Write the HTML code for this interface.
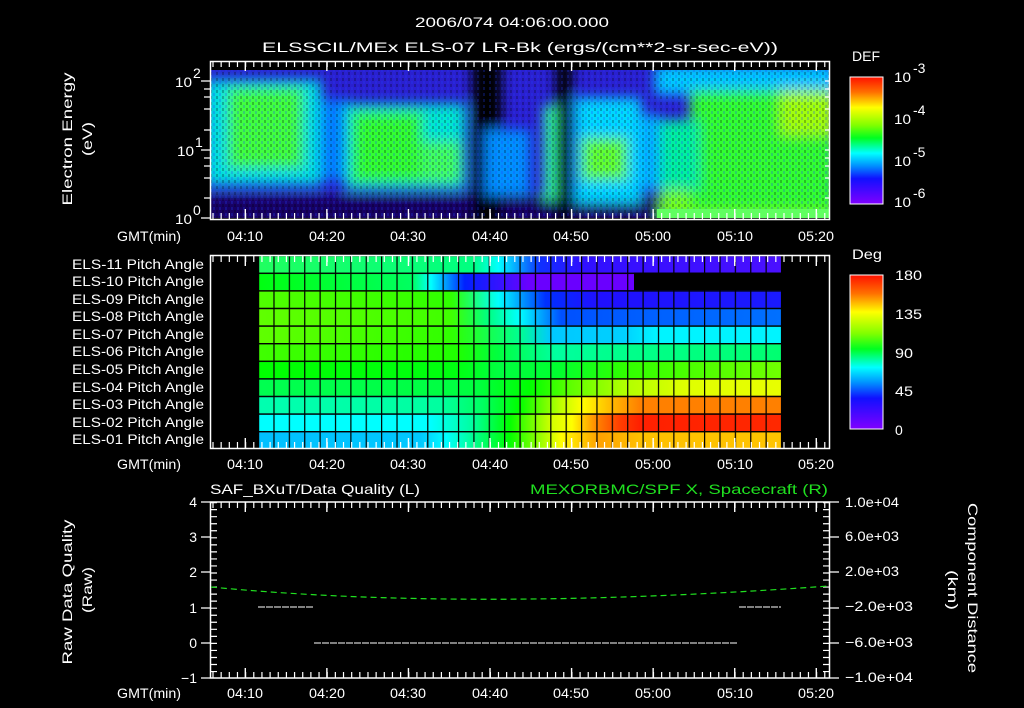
<!DOCTYPE html>
<html><head><meta charset="utf-8"><style>
html,body{margin:0;padding:0;background:#000;width:1024px;height:708px;overflow:hidden}
svg{display:block}
text{font-family:"Liberation Sans",sans-serif;fill:#fff;font-size:14px}
</style></head><body>
<svg width="1024" height="708" viewBox="0 0 1024 708" xmlns="http://www.w3.org/2000/svg">
<defs>
<linearGradient id="cb" x1="0" y1="0" x2="0" y2="1">
<stop offset="0" stop-color="#ff1000"/><stop offset="0.12" stop-color="#ff7000"/><stop offset="0.24" stop-color="#ffff00"/><stop offset="0.38" stop-color="#80ff00"/><stop offset="0.48" stop-color="#00ff20"/><stop offset="0.6" stop-color="#00ffff"/><stop offset="0.7" stop-color="#0090ff"/><stop offset="0.8" stop-color="#1010ff"/><stop offset="1" stop-color="#8000ff"/>
</linearGradient>
<filter id="bl" filterUnits="userSpaceOnUse" x="150" y="20" width="750" height="260"><feGaussianBlur stdDeviation="6"/></filter>
<clipPath id="sp"><rect x="211" y="70" width="618" height="148"/></clipPath>
<linearGradient id="r1"><stop offset="0" stop-color="#20ff60"/><stop offset="0.41" stop-color="#00ff80"/><stop offset="0.46" stop-color="#00ffff"/><stop offset="0.54" stop-color="#1030ff"/><stop offset="0.62" stop-color="#3010ff"/><stop offset="1" stop-color="#4a10ff"/></linearGradient>
<linearGradient id="r2"><stop offset="0" stop-color="#00ff10"/><stop offset="0.41" stop-color="#00ff60"/><stop offset="0.46" stop-color="#00ffff"/><stop offset="0.55" stop-color="#0020ff"/><stop offset="0.66" stop-color="#4010ff"/><stop offset="0.72" stop-color="#6a00ff"/></linearGradient>
<linearGradient id="r3"><stop offset="0" stop-color="#50ff00"/><stop offset="0.37" stop-color="#30ff00"/><stop offset="0.46" stop-color="#00ffff"/><stop offset="0.55" stop-color="#0030ff"/><stop offset="0.65" stop-color="#2010ff"/><stop offset="1" stop-color="#1a1aff"/></linearGradient>
<linearGradient id="r4"><stop offset="0" stop-color="#60ff00"/><stop offset="0.37" stop-color="#40ff00"/><stop offset="0.44" stop-color="#00ff80"/><stop offset="0.5" stop-color="#00ffff"/><stop offset="0.58" stop-color="#0050ff"/><stop offset="0.75" stop-color="#0060ff"/><stop offset="1" stop-color="#0070ff"/></linearGradient>
<linearGradient id="r5"><stop offset="0" stop-color="#60ff00"/><stop offset="0.37" stop-color="#30ff00"/><stop offset="0.5" stop-color="#00ff90"/><stop offset="0.56" stop-color="#00c8ff"/><stop offset="0.7" stop-color="#00d0ff"/><stop offset="0.76" stop-color="#00f4ff"/><stop offset="1" stop-color="#00f4ff"/></linearGradient>
<linearGradient id="r6"><stop offset="0" stop-color="#40ff00"/><stop offset="0.38" stop-color="#20ff00"/><stop offset="0.46" stop-color="#00ff40"/><stop offset="0.57" stop-color="#00ffa0"/><stop offset="0.65" stop-color="#00ff90"/><stop offset="1" stop-color="#00ff70"/></linearGradient>
<linearGradient id="r7"><stop offset="0" stop-color="#00ff00"/><stop offset="0.38" stop-color="#00ff10"/><stop offset="0.46" stop-color="#00ff40"/><stop offset="0.57" stop-color="#00ff30"/><stop offset="0.7" stop-color="#30ff00"/><stop offset="1" stop-color="#70ff00"/></linearGradient>
<linearGradient id="r8"><stop offset="0" stop-color="#00ff50"/><stop offset="0.42" stop-color="#00ff40"/><stop offset="0.52" stop-color="#00ff00"/><stop offset="0.6" stop-color="#60ff00"/><stop offset="0.7" stop-color="#b0ff00"/><stop offset="0.82" stop-color="#e0ff00"/><stop offset="1" stop-color="#e8ff00"/></linearGradient>
<linearGradient id="r9"><stop offset="0" stop-color="#00ffb0"/><stop offset="0.35" stop-color="#00ffa0"/><stop offset="0.43" stop-color="#00ff60"/><stop offset="0.5" stop-color="#00ff00"/><stop offset="0.58" stop-color="#c0ff00"/><stop offset="0.62" stop-color="#ffff00"/><stop offset="0.67" stop-color="#ffc000"/><stop offset="0.73" stop-color="#ff8000"/><stop offset="1" stop-color="#ff8000"/></linearGradient>
<linearGradient id="r10"><stop offset="0" stop-color="#00ffff"/><stop offset="0.33" stop-color="#00ffff"/><stop offset="0.41" stop-color="#00ffa0"/><stop offset="0.48" stop-color="#00ff00"/><stop offset="0.56" stop-color="#d0ff00"/><stop offset="0.6" stop-color="#ffff00"/><stop offset="0.65" stop-color="#ff8000"/><stop offset="0.69" stop-color="#ff4000"/><stop offset="0.73" stop-color="#ff2000"/><stop offset="1" stop-color="#ff2800"/></linearGradient>
<linearGradient id="r11"><stop offset="0" stop-color="#00c0ff"/><stop offset="0.31" stop-color="#00c8ff"/><stop offset="0.36" stop-color="#00ffff"/><stop offset="0.42" stop-color="#00ff80"/><stop offset="0.48" stop-color="#00ff00"/><stop offset="0.58" stop-color="#ffff00"/><stop offset="0.65" stop-color="#ffa000"/><stop offset="0.73" stop-color="#ffc000"/><stop offset="1" stop-color="#ffc400"/></linearGradient>
<pattern id="gv" x="258" y="0" width="15.38" height="10" patternUnits="userSpaceOnUse"><rect x="0" y="0" width="1.2" height="10" fill="#000"/></pattern>
<pattern id="gh" x="0" y="255" width="10" height="17.6" patternUnits="userSpaceOnUse"><rect x="0" y="0" width="10" height="1.4" fill="#000"/></pattern>
<pattern id="nz" width="6" height="6" patternUnits="userSpaceOnUse"><rect width="2" height="3" fill="#000" opacity="0.25"/><rect x="3" y="3" width="2" height="3" fill="#2040ff" opacity="0.25"/></pattern>
</defs>

<!-- titles -->
<text x="512" y="27" text-anchor="middle" font-size="15" textLength="194" lengthAdjust="spacingAndGlyphs">2006/074 04:06:00.000</text>
<text x="520" y="52" text-anchor="middle" font-size="15" textLength="516" lengthAdjust="spacingAndGlyphs">ELSSCIL/MEx ELS-07 LR-Bk  (ergs/(cm**2-sr-sec-eV))</text>

<!-- TOP PANEL spectrogram -->
<g clip-path="url(#sp)">
<rect x="211" y="70" width="618" height="148" fill="#2a20d0"/>
<g filter="url(#bl)">
<rect x="200" y="195" width="640" height="30" fill="#180060"/>
<rect x="472" y="60" width="30" height="170" fill="#000"/>
<rect x="556" y="60" width="16" height="170" fill="#000"/>
<rect x="205" y="80" width="116" height="105" fill="#00e0e0"/>
<rect x="228" y="88" width="75" height="80" fill="#40ff40"/>
<rect x="320" y="100" width="28" height="80" fill="#0080ff"/>
<rect x="345" y="104" width="120" height="85" fill="#00e8d0"/>
<rect x="352" y="112" width="70" height="70" fill="#30ff30"/>
<rect x="420" y="142" width="40" height="40" fill="#40ff60"/>
<rect x="485" y="130" width="45" height="65" fill="#0090ff"/>
<rect x="544" y="105" width="12" height="95" fill="#30ffa0"/>
<rect x="575" y="98" width="66" height="105" fill="#00d8ff"/>
<rect x="582" y="138" width="45" height="42" fill="#60ff30"/>
<rect x="640" y="115" width="20" height="75" fill="#00b0ff"/>
<rect x="655" y="65" width="180" height="30" fill="#00c8ff"/>
<rect x="660" y="180" width="175" height="45" fill="#70ff20"/>
<rect x="690" y="90" width="145" height="120" fill="#30ff30"/>
<rect x="660" y="120" width="40" height="70" fill="#00f0a0"/>
<rect x="780" y="90" width="55" height="45" fill="#a0ff10"/>
</g>
<rect x="211" y="70" width="618" height="148" fill="url(#nz)"/>
<rect x="657" y="209" width="172" height="9" fill="#60ff60"/>
</g>
<!-- top frame -->
<rect x="210.5" y="61.5" width="619" height="158" fill="none" stroke="#fff" stroke-width="1.5"/>
<line x1="211" y1="64" x2="829" y2="64" stroke="#fff" stroke-width="6" stroke-dasharray="1.2 6.957" stroke-dashoffset="-1.4"/>
<line x1="211" y1="216" x2="829" y2="216" stroke="#fff" stroke-width="6" stroke-dasharray="1.2 6.957" stroke-dashoffset="-1.4"/>
<line x1="211" y1="66" x2="829" y2="66" stroke="#fff" stroke-width="10" stroke-dasharray="1.4 80.17" stroke-dashoffset="-33.6"/>
<line x1="211" y1="214" x2="829" y2="214" stroke="#fff" stroke-width="10" stroke-dasharray="1.4 80.17" stroke-dashoffset="-33.6"/>
<g stroke="#fff" stroke-width="1.2">
<path d="M201 81h9M201 150h9M201 218h9M204 89h6M204 97h6M204 109h6M204 130h6M204 158h6M204 166h6M204 178h6M204 198h6M825 81h5M825 150h5M825 89h5M825 97h5M825 109h5M825 130h5M825 158h5M825 166h5M825 178h5M825 198h5"/>
</g>
<text x="175" y="87" font-size="15" textLength="17" lengthAdjust="spacingAndGlyphs">10</text><text x="193" y="78" font-size="10">2</text>
<text x="177" y="156" font-size="15" textLength="17" lengthAdjust="spacingAndGlyphs">10</text><text x="195" y="147" font-size="10">1</text>
<text x="175" y="224" font-size="15" textLength="17" lengthAdjust="spacingAndGlyphs">10</text><text x="193" y="215" font-size="10">0</text>
<text transform="translate(72,139) rotate(-90)" text-anchor="middle" font-size="15" textLength="133" lengthAdjust="spacingAndGlyphs">Electron Energy</text>
<text transform="translate(92,139) rotate(-90)" text-anchor="middle" font-size="15" textLength="34" lengthAdjust="spacingAndGlyphs">(eV)</text>
<g font-size="14">
<text x="117" y="241" textLength="64" lengthAdjust="spacingAndGlyphs">GMT(min)</text>
<g text-anchor="middle">
<text x="245" y="241" textLength="36" lengthAdjust="spacingAndGlyphs">04:10</text><text x="327" y="241" textLength="36" lengthAdjust="spacingAndGlyphs">04:20</text><text x="408" y="241" textLength="36" lengthAdjust="spacingAndGlyphs">04:30</text><text x="490" y="241" textLength="36" lengthAdjust="spacingAndGlyphs">04:40</text><text x="571" y="241" textLength="36" lengthAdjust="spacingAndGlyphs">04:50</text><text x="653" y="241" textLength="36" lengthAdjust="spacingAndGlyphs">05:00</text><text x="735" y="241" textLength="36" lengthAdjust="spacingAndGlyphs">05:10</text><text x="816" y="241" textLength="36" lengthAdjust="spacingAndGlyphs">05:20</text>
</g></g>
<!-- DEF colorbar -->
<rect x="850" y="77" width="33" height="127" fill="url(#cb)" stroke="#fff" stroke-width="1"/>
<text x="852" y="61" font-size="15" textLength="28" lengthAdjust="spacingAndGlyphs">DEF</text>
<text x="894" y="82" font-size="15" textLength="17" lengthAdjust="spacingAndGlyphs">10</text><text x="913" y="73" font-size="10">-3</text>
<text x="894" y="124" font-size="15" textLength="17" lengthAdjust="spacingAndGlyphs">10</text><text x="913" y="115" font-size="10">-4</text>
<text x="894" y="166" font-size="15" textLength="17" lengthAdjust="spacingAndGlyphs">10</text><text x="913" y="157" font-size="10">-5</text>
<text x="894" y="207" font-size="15" textLength="17" lengthAdjust="spacingAndGlyphs">10</text><text x="913" y="198" font-size="10">-6</text>

<!-- MIDDLE PANEL pitch angle -->
<rect x="258" y="255" width="523" height="17.6" fill="url(#r1)"/>
<rect x="258" y="272.6" width="376" height="17.6" fill="url(#r2)"/>
<rect x="258" y="290.2" width="523" height="17.6" fill="url(#r3)"/>
<rect x="258" y="307.8" width="523" height="17.6" fill="url(#r4)"/>
<rect x="258" y="325.4" width="523" height="17.6" fill="url(#r5)"/>
<rect x="258" y="343" width="523" height="17.6" fill="url(#r6)"/>
<rect x="258" y="360.6" width="523" height="17.6" fill="url(#r7)"/>
<rect x="258" y="378.2" width="523" height="17.6" fill="url(#r8)"/>
<rect x="258" y="395.8" width="523" height="17.6" fill="url(#r9)"/>
<rect x="258" y="413.4" width="523" height="17.6" fill="url(#r10)"/>
<rect x="258" y="431" width="523" height="18" fill="url(#r11)"/>
<rect x="258" y="255" width="523" height="194" fill="url(#gv)"/>
<rect x="258" y="255" width="523" height="194" fill="url(#gh)"/>
<rect x="210.5" y="255.5" width="619" height="193" fill="none" stroke="#fff" stroke-width="1.5"/>
<line x1="211" y1="259" x2="829" y2="259" stroke="#fff" stroke-width="6" stroke-dasharray="1.2 6.957" stroke-dashoffset="-1.4"/>
<line x1="211" y1="445" x2="829" y2="445" stroke="#fff" stroke-width="6" stroke-dasharray="1.2 6.957" stroke-dashoffset="-1.4"/>
<line x1="211" y1="261" x2="829" y2="261" stroke="#fff" stroke-width="10" stroke-dasharray="1.4 80.17" stroke-dashoffset="-33.6"/>
<line x1="211" y1="443" x2="829" y2="443" stroke="#fff" stroke-width="10" stroke-dasharray="1.4 80.17" stroke-dashoffset="-33.6"/>
<g font-size="13" text-anchor="end">
<text x="204" y="269" textLength="132" lengthAdjust="spacingAndGlyphs">ELS-11 Pitch Angle</text>
<text x="204" y="286" textLength="132" lengthAdjust="spacingAndGlyphs">ELS-10 Pitch Angle</text>
<text x="204" y="304" textLength="132" lengthAdjust="spacingAndGlyphs">ELS-09 Pitch Angle</text>
<text x="204" y="321" textLength="132" lengthAdjust="spacingAndGlyphs">ELS-08 Pitch Angle</text>
<text x="204" y="339" textLength="132" lengthAdjust="spacingAndGlyphs">ELS-07 Pitch Angle</text>
<text x="204" y="356" textLength="132" lengthAdjust="spacingAndGlyphs">ELS-06 Pitch Angle</text>
<text x="204" y="374" textLength="132" lengthAdjust="spacingAndGlyphs">ELS-05 Pitch Angle</text>
<text x="204" y="392" textLength="132" lengthAdjust="spacingAndGlyphs">ELS-04 Pitch Angle</text>
<text x="204" y="409" textLength="132" lengthAdjust="spacingAndGlyphs">ELS-03 Pitch Angle</text>
<text x="204" y="427" textLength="132" lengthAdjust="spacingAndGlyphs">ELS-02 Pitch Angle</text>
<text x="204" y="444" textLength="132" lengthAdjust="spacingAndGlyphs">ELS-01 Pitch Angle</text>
</g>
<g font-size="14">
<text x="117" y="469" textLength="64" lengthAdjust="spacingAndGlyphs">GMT(min)</text>
<g text-anchor="middle">
<text x="245" y="469" textLength="36" lengthAdjust="spacingAndGlyphs">04:10</text><text x="327" y="469" textLength="36" lengthAdjust="spacingAndGlyphs">04:20</text><text x="408" y="469" textLength="36" lengthAdjust="spacingAndGlyphs">04:30</text><text x="490" y="469" textLength="36" lengthAdjust="spacingAndGlyphs">04:40</text><text x="571" y="469" textLength="36" lengthAdjust="spacingAndGlyphs">04:50</text><text x="653" y="469" textLength="36" lengthAdjust="spacingAndGlyphs">05:00</text><text x="735" y="469" textLength="36" lengthAdjust="spacingAndGlyphs">05:10</text><text x="816" y="469" textLength="36" lengthAdjust="spacingAndGlyphs">05:20</text>
</g></g>
<!-- Deg colorbar -->
<rect x="850" y="275" width="33" height="154" fill="url(#cb)" stroke="#fff" stroke-width="1"/>
<text x="852" y="259" font-size="15" textLength="30" lengthAdjust="spacingAndGlyphs">Deg</text>
<g font-size="16"><text x="895" y="280" textLength="27" lengthAdjust="spacingAndGlyphs">180</text><text x="895" y="319" textLength="27" lengthAdjust="spacingAndGlyphs">135</text><text x="895" y="358" textLength="18" lengthAdjust="spacingAndGlyphs">90</text><text x="895" y="396" textLength="18" lengthAdjust="spacingAndGlyphs">45</text><text x="895" y="435">0</text></g>

<!-- BOTTOM PANEL -->
<text x="210" y="494" font-size="15" textLength="210" lengthAdjust="spacingAndGlyphs">SAF_BXuT/Data Quality (L)</text>
<text x="828" y="494" font-size="15" text-anchor="end" style="fill:#20e020" textLength="298" lengthAdjust="spacingAndGlyphs">MEXORBMC/SPF X, Spacecraft (R)</text>
<rect x="210.5" y="502" width="619" height="176" fill="none" stroke="#fff" stroke-width="1.5"/>
<line x1="211" y1="505" x2="829" y2="505" stroke="#fff" stroke-width="6" stroke-dasharray="1.2 6.957" stroke-dashoffset="-1.4"/>
<line x1="211" y1="675" x2="829" y2="675" stroke="#fff" stroke-width="6" stroke-dasharray="1.2 6.957" stroke-dashoffset="-1.4"/>
<line x1="211" y1="507" x2="829" y2="507" stroke="#fff" stroke-width="10" stroke-dasharray="1.4 80.17" stroke-dashoffset="-33.6"/>
<line x1="211" y1="673" x2="829" y2="673" stroke="#fff" stroke-width="10" stroke-dasharray="1.4 80.17" stroke-dashoffset="-33.6"/>
<line x1="214" y1="502" x2="214" y2="678" stroke="#fff" stroke-width="6" stroke-dasharray="1.2 5.84"/>
<line x1="826" y1="502" x2="826" y2="678" stroke="#fff" stroke-width="6" stroke-dasharray="1.2 5.84"/>
<path d="M201 502h9M201 537h9M201 572h9M201 608h9M201 643h9M201 678h9M830 502h9M830 537h9M830 572h9M830 608h9M830 643h9M830 678h9" stroke="#fff" stroke-width="1.2"/>
<g font-size="15" text-anchor="end"><text x="197" y="507">4</text><text x="197" y="542">3</text><text x="197" y="577">2</text><text x="197" y="613">1</text><text x="197" y="648">0</text><text x="197" y="683">−1</text></g>
<g font-size="14"><text x="845" y="507" textLength="54" lengthAdjust="spacingAndGlyphs">1.0e+04</text><text x="845" y="541" textLength="54" lengthAdjust="spacingAndGlyphs">6.0e+03</text><text x="845" y="576" textLength="54" lengthAdjust="spacingAndGlyphs">2.0e+03</text><text x="845" y="611" textLength="68" lengthAdjust="spacingAndGlyphs">−2.0e+03</text><text x="845" y="647" textLength="68" lengthAdjust="spacingAndGlyphs">−6.0e+03</text><text x="845" y="682" textLength="68" lengthAdjust="spacingAndGlyphs">−1.0e+04</text></g>
<text transform="translate(72,592) rotate(-90)" text-anchor="middle" font-size="15" textLength="145" lengthAdjust="spacingAndGlyphs">Raw Data Quality</text>
<text transform="translate(92,590) rotate(-90)" text-anchor="middle" font-size="15" textLength="46" lengthAdjust="spacingAndGlyphs">(Raw)</text>
<text transform="translate(968,588) rotate(90)" text-anchor="middle" font-size="15" textLength="170" lengthAdjust="spacingAndGlyphs">Component Distance</text>
<text transform="translate(948,590) rotate(90)" text-anchor="middle" font-size="15" textLength="40" lengthAdjust="spacingAndGlyphs">(km)</text>
<path d="M211 587 Q470 612 829 586" fill="none" stroke="#20e020" stroke-width="1.2" stroke-dasharray="6 4"/>
<path d="M258 607h55M314 643h424M739 607h42" fill="none" stroke="#fff" stroke-width="1" stroke-dasharray="7 1"/>
<g font-size="14">
<text x="117" y="698" textLength="64" lengthAdjust="spacingAndGlyphs">GMT(min)</text>
<g text-anchor="middle">
<text x="245" y="698" textLength="36" lengthAdjust="spacingAndGlyphs">04:10</text><text x="327" y="698" textLength="36" lengthAdjust="spacingAndGlyphs">04:20</text><text x="408" y="698" textLength="36" lengthAdjust="spacingAndGlyphs">04:30</text><text x="490" y="698" textLength="36" lengthAdjust="spacingAndGlyphs">04:40</text><text x="571" y="698" textLength="36" lengthAdjust="spacingAndGlyphs">04:50</text><text x="653" y="698" textLength="36" lengthAdjust="spacingAndGlyphs">05:00</text><text x="735" y="698" textLength="36" lengthAdjust="spacingAndGlyphs">05:10</text><text x="816" y="698" textLength="36" lengthAdjust="spacingAndGlyphs">05:20</text>
</g></g>
</svg>
</body></html>
